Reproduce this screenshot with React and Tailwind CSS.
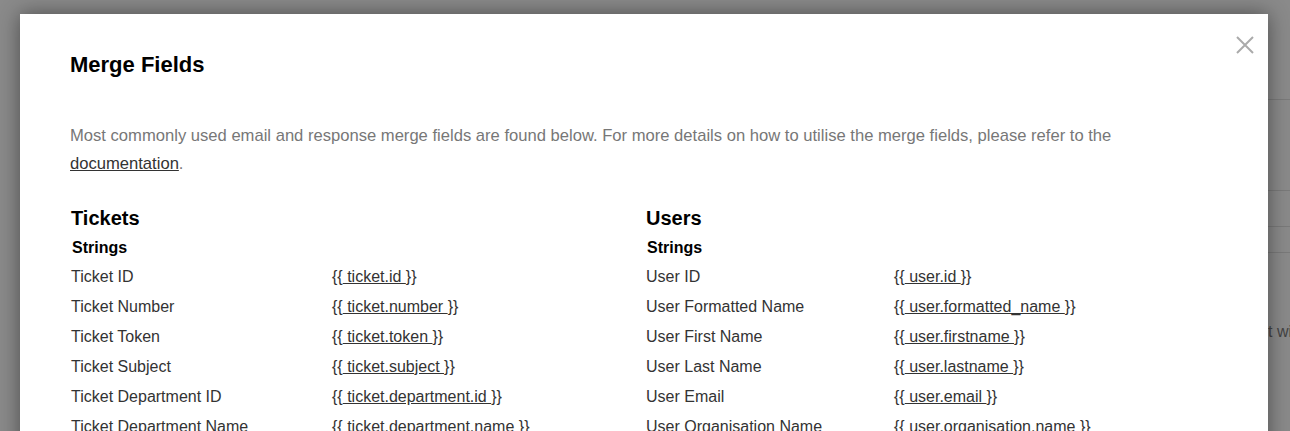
export default function App() {
  const tickets = [
    ["Ticket ID", "ticket.id"],
    ["Ticket Number", "ticket.number"],
    ["Ticket Token", "ticket.token"],
    ["Ticket Subject", "ticket.subject"],
    ["Ticket Department ID", "ticket.department.id"],
    ["Ticket Department Name", "ticket.department.name"],
  ];
  const users = [
    ["User ID", "user.id"],
    ["User Formatted Name", "user.formatted_name"],
    ["User First Name", "user.firstname"],
    ["User Last Name", "user.lastname"],
    ["User Email", "user.email"],
    ["User Organisation Name", "user.organisation.name"],
  ];
  const Rows = ({ rows, w }) => (
    <div className="mt-[3px] flex flex-col">
      {rows.map(([l, v]) => (
        <div key={l} className="flex h-[30px] items-center text-[16px] text-[#333]">
          <div style={{ width: w }} className="shrink-0">{l}</div>
          <div>
            {"{{"}<span className="underline">{" " + v + " "}</span>{"}}"}
          </div>
        </div>
      ))}
    </div>
  );
  const Section = ({ title, rows, w, width }) => (
    <div style={{ width }} className="flex flex-col pl-px">
      <h2 className="text-[20px] font-bold leading-[24px] text-black">{title}</h2>
      <div className="mt-[7px] pl-[1px] text-[16px] font-bold leading-[22px] text-black">Strings</div>
      <Rows rows={rows} w={w} />
    </div>
  );
  return (
    <div className="relative h-[431px] w-[1290px] overflow-hidden bg-[#8a8a8a]" style={{ fontFamily: '"Liberation Sans", Arial, sans-serif' }}>
      <div className="absolute left-[1268px] top-[99px] h-px w-[30px] bg-[#7a7a7a]" />
      <div className="absolute left-[1268px] top-[190px] h-px w-[30px] bg-[#7a7a7a]" />
      <div className="absolute left-[1268px] top-[226px] h-px w-[30px] bg-[#7a7a7a]" />
      <div className="absolute left-[1268px] top-[252px] h-px w-[30px] bg-[#7a7a7a]" />
      <div className="absolute left-[1268px] top-[320px] whitespace-nowrap text-[16px] text-[#444]">t wi</div>
      <div className="absolute left-[20px] top-[14px] h-[500px] w-[1248px] bg-white px-[50px] shadow-[0_0_20px_rgba(0,0,0,0.45)]">
        <button className="absolute right-[14px] top-[22px] text-[#aaa]">
          <svg width="18" height="18" viewBox="0 0 18 18" stroke="currentColor" strokeWidth="2"><path d="M1 1L17 17M17 1L1 17" /></svg>
        </button>
        <h1 className="mt-[38px] text-[22px] font-bold leading-[26px] text-black">Merge Fields</h1>
        <p className="mt-[44px] max-w-[1060px] text-[16.6px] leading-[28px] text-[#777]">
          Most commonly used email and response merge fields are found below. For more details on how to utilise the merge fields, please refer to the <span className="text-[#333] underline">documentation</span>.
        </p>
        <div className="mt-[28px] flex">
          <Section title="Tickets" rows={tickets} w={261} width={575} />
          <Section title="Users" rows={users} w={248} />
        </div>
      </div>
    </div>
  );
}
